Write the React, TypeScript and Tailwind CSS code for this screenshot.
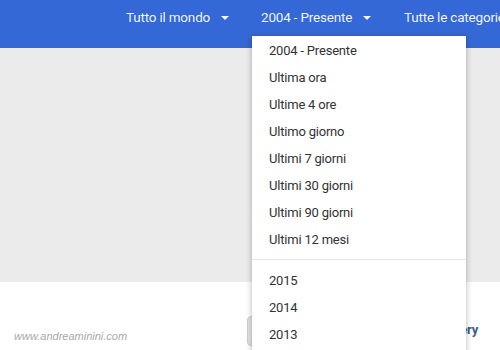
const options = [
  "2004 - Presente",
  "Ultima ora",
  "Ultime 4 ore",
  "Ultimo giorno",
  "Ultimi 7 giorni",
  "Ultimi 30 giorni",
  "Ultimi 90 giorni",
  "Ultimi 12 mesi",
];

const years = ["2015", "2014", "2013", "2012"];

function Caret() {
  return (
    <svg width="8" height="4" viewBox="0 0 8 4" className="ml-[11px] mt-[2px] shrink-0">
      <path d="M0 0 L8 0 L4 4 Z" fill="currentColor" />
    </svg>
  );
}

export default function App() {
  return (
    <div className="relative w-[500px] h-[350px] overflow-hidden bg-white font-['Roboto',sans-serif] tracking-[-0.2px]">
      <div className="h-[48px] bg-[#3468d6] text-white/95 text-[13.5px] flex items-start pt-[6px] whitespace-nowrap">
        <div className="flex items-center h-[22px] ml-[126px] shrink-0">
          Tutto il mondo
          <Caret />
        </div>
        <div className="flex items-center h-[22px] ml-[32px] shrink-0">
          2004 - Presente
          <Caret />
        </div>
        <div className="flex items-center h-[22px] ml-[33px] shrink-0">
          Tutte le categorie
        </div>
      </div>

      <div className="h-[234px] bg-[#ebebeb]" />

      <div className="flex items-end h-[68px]">
        <span className="ml-[14px] mb-[6px] text-[11px] italic text-[#a8a8a8] font-['Liberation_Sans',sans-serif] tracking-normal shrink-0">
          www.andreaminini.com
        </span>
        <div className="ml-[120px] mb-[4px] w-[12px] h-[30px] bg-[#e3e3e3] border border-[#cfcfcf] rounded-l-sm text-[12px] font-bold text-[#444] pl-[4px] flex items-center shrink-0">
          F
        </div>
        <span className="ml-auto mr-[22px] mb-[11px] text-[13px] font-bold text-[#3b5c8c]">
          ery
        </span>
      </div>

      <div className="absolute left-[252px] top-[36px] w-[214px] h-[330px] bg-white shadow-[0_2px_6px_rgba(0,0,0,0.3)] text-[13px] text-[#333]">
        <div className="pt-[1px]">
          {options.map((o) => (
            <div key={o} className="h-[27px] flex items-center pl-[17px] whitespace-nowrap">
              {o}
            </div>
          ))}
        </div>
        <div className="h-px bg-[#e5e5e5] mt-[6px]" />
        <div className="pt-[7px]">
          {years.map((y) => (
            <div key={y} className="h-[27px] flex items-center pl-[17px]">
              {y}
            </div>
          ))}
        </div>
      </div>
    </div>
  );
}
